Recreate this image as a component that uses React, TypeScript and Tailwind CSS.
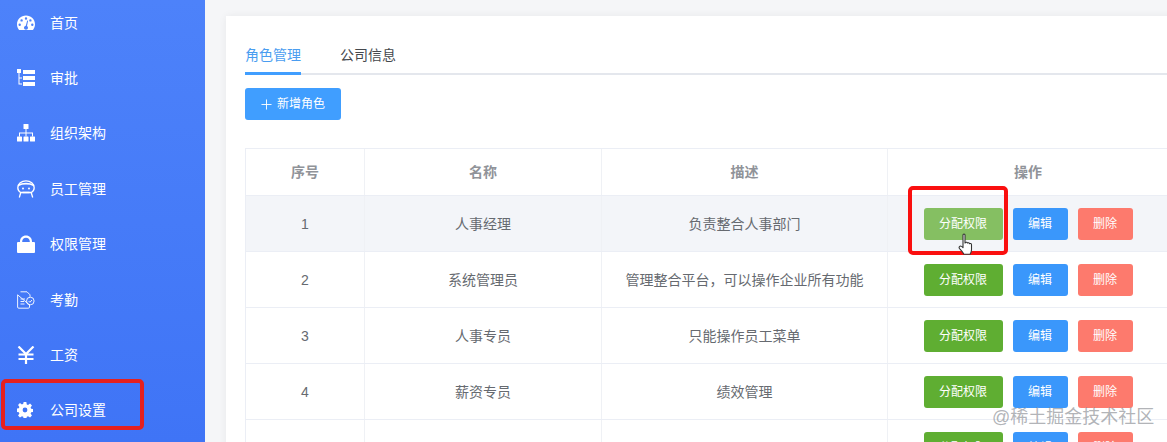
import { FC, ReactNode } from 'react';

const FONT = 'font-["Liberation_Sans","Noto_Sans_CJK_SC",sans-serif]';

const Gauge = () => (
    <svg viewBox="0 0 18 16" className="w-[18px] h-4" fill="#fff">
        <path fillRule="evenodd" d="M9 0.5C4 0.5 0 4.4 0 9.3c0 2 .6 3.8 1.7 5.2.3.4.7.6 1.2.6h12.2c.5 0 .9-.2 1.2-.6C17.4 13.100 18 11.300 18 9.300 18 4.400 14 .5 9 .5zM9 2.300a1.200 1.200 0 1 1 0 2.400 1.200 1.200 0 0 1 0-2.400zM4.600 4.200a1.200 1.200 0 1 1 0 2.400 1.200 1.200 0 0 1 0-2.400zM2.700 8.500a1.200 1.200 0 1 1 0 2.400 1.200 1.200 0 0 1 0-2.400zM15.300 8.500a1.200 1.200 0 1 1 0 2.400 1.200 1.200 0 0 1 0-2.400zM13.400 4.200a1.200 1.200 0 1 1 0 2.400 1.200 1.200 0 0 1 0-2.400zM10.200 5.500l.9.300-1.100 5.200c.6.400 1 1 1 1.700 0 1.100-.9 2-2 2s-2-.9-2-2c0-1 .8-1.900 1.800-2z" />
    </svg>
);

const Approve = () => (
    <svg viewBox="0 0 18 18" className="w-[18px] h-[18px]" fill="#fff">
        <rect x="0" y="0" width="4" height="4" />
        <rect x="6" y="1" width="12" height="4" />
        <rect x="6" y="7" width="12" height="4" />
        <rect x="6" y="13" width="12" height="4" />
        <path d="M1.500 4h1v4.500H5v1H2.500v5H5v1H1.500z" />
    </svg>
);

const Org = () => (
    <svg viewBox="0 0 18 18" className="w-[18px] h-[18px]" fill="#fff">
        <rect x="6.500" y="0" width="5" height="5" rx=".6" />
        <rect x="0" y="12.500" width="5" height="5" rx=".6" />
        <rect x="6.500" y="12.500" width="5" height="5" rx=".6" />
        <rect x="13" y="12.500" width="5" height="5" rx=".6" />
        <path d="M8.500 5h1v3.500h6.500v4h-1v-3H9.500v3h-1v-3H3v3H2v-4h6.500z" />
    </svg>
);

const Staff = () => (
    <svg viewBox="0 0 18 18" className="w-[18px] h-[18px]" fill="none" stroke="#fff" strokeWidth="1.300">
        <path d="M3.600 12.500C1.800 11.500.8 9.800.8 7.800.8 3.500 4.500.8 9 .8s8.200 2.700 8.200 7c0 2-1 3.700-2.800 4.700z" />
        <path d="M1.500 5.300C3.500 4.200 6 3.700 9 3.700s5.500.5 7.500 1.600" strokeWidth="1.800" />
        <path d="M3.800 12.500l-1.500 5M14.200 12.500l1.500 5M5.500 12.500h7" />
        <circle cx="6" cy="8.500" r="1" fill="#fff" stroke="none" />
        <circle cx="12" cy="8.500" r="1" fill="#fff" stroke="none" />
    </svg>
);

const Lock = () => (
    <svg viewBox="0 0 18 18" className="w-[18px] h-[18px]" fill="#fff">
        <path d="M3 8V6.500C3 3 5.600.5 9 .5s6 2.500 6 6V8h-2.200V6.500C12.800 4.300 11.200 2.700 9 2.700S5.200 4.300 5.200 6.500V8z" />
        <rect x="0" y="7" width="18" height="11" rx="1" />
    </svg>
);

const Attendance = () => (
    <svg viewBox="0 0 18 18" className="w-[18px] h-[18px]" fill="none" stroke="#fff" strokeWidth=".9">
        <path d="M3.500 .8h6.500l3 3v2M12.500 14v2a1.200 1.200 0 0 1-1.200 1.200H1.800A1.200 1.200 0 0 1 .6 16V3.800z" />
        <path d="M3.500 8h4.500M3.500 10.500h3.500M3.500 13h4" />
        <circle cx="13.300" cy="10" r="3.800" />
        <path d="M11.600 10l1.300 1.300 2.100-2.300" />
    </svg>
);

const Yen = () => (
    <svg viewBox="0 0 18 18" className="w-[18px] h-[18px]" fill="none" stroke="#fff" strokeWidth="2.200">
        <path d="M1.500 0.500L9 8l7.500-7.500M9 8v10M1.500 8.500h15M1.500 13h15" />
    </svg>
);

const Gear = () => (
    <svg viewBox="-1 -1 20 20" className="w-4 h-4" fill="#fff">
        <path fillRule="evenodd" d="M7.300 -1h3.400l.5 3 1.600.7 2.500-1.700 2.400 2.400-1.700 2.500.7 1.600 3 .5v3.400l-3 .5-.7 1.600 1.700 2.500-2.400 2.400-2.500-1.700-1.600.7-.5 3H7.300l-.5-3-1.600-.7-2.500 1.700-2.400-2.400 1.700-2.500-.7-1.600-3-.5V7.300l3-.5.7-1.600-1.700-2.500 2.400-2.400 2.500 1.700 1.600-.7zM9 6a3 3 0 1 0 0 6 3 3 0 0 0 0-6z" />
    </svg>
);

const Hand = () => (
    <svg viewBox="0 0 18 24" className="w-[18px] h-6" fill="#fff" stroke="#333" strokeWidth="1.100" strokeLinejoin="round">
        <path d="M6 2c0-1.300 2-1.300 2 0v8l.5-.5c.8-.6 1.800-.2 2 .5.700-.5 1.800-.2 2 .7.800-.5 2-.1 2 1v5c0 2-.5 3-1.500 4.500H7c-1-1.500-2-3-4-5-1-1-1.500-2 0-3 .8-.5 2 .5 3 1.500z" />
    </svg>
);

const NAV: { label: string; icon: ReactNode; h: string }[] = [
    { label: '首页', icon: <Gauge />, h: 'h-[55px]' },
    { label: '审批', icon: <Approve />, h: 'h-[55px]' },
    { label: '组织架构', icon: <Org />, h: 'h-[56px]' },
    { label: '员工管理', icon: <Staff />, h: 'h-[55px]' },
    { label: '权限管理', icon: <Lock />, h: 'h-[56px]' },
    { label: '考勤', icon: <Attendance />, h: 'h-[55px]' },
    { label: '工资', icon: <Yen />, h: 'h-[55px]' },
    { label: '公司设置', icon: <Gear />, h: 'h-[55px]' },
];

const ROWS = [
    { id: '1', name: '人事经理', desc: '负责整合人事部门', hover: true },
    { id: '2', name: '系统管理员', desc: '管理整合平台，可以操作企业所有功能' },
    { id: '3', name: '人事专员', desc: '只能操作员工菜单' },
    { id: '4', name: '薪资专员', desc: '绩效管理' },
    { id: '', name: '员工', desc: '员工' },
];

const GRID = 'grid grid-cols-[119px_237px_286px_280px] w-[931px]';
const CELL = 'flex items-center justify-center border-r border-[#eff1f5]';

const Row: FC<{ id: string; name: string; desc: string; hover?: boolean }> = ({ id, name, desc, hover }) => (
    <div className={ `${ GRID } h-14 border-b border-[#ebeef5] text-sm text-[#666a70] ${ hover ? 'bg-[#f3f5f9]' : '' }` }>
        <div className={ CELL }>{ id }</div>
        <div className={ CELL }>{ name }</div>
        <div className={ CELL }>{ desc }</div>
        <div className="flex items-center justify-center gap-[10px] text-xs text-white">
            <button className={ `w-[79px] h-8 rounded-[3px] ${ hover ? 'bg-[#85bf62]' : 'bg-[#5fae32]' }` }>分配权限</button>
            <button className="w-[55px] h-8 rounded-[3px] bg-[#3a97fb]">编辑</button>
            <button className="w-[55px] h-8 rounded-[3px] bg-[#fd7a6d]">删除</button>
        </div>
    </div>
);

export default function App()
{
    return (
        <div className={ `relative flex w-[1167px] h-[442px] overflow-hidden bg-[#f5f6f8] ${ FONT }` }>
            <aside className="w-[205px] shrink-0 bg-gradient-to-b from-[#4d82fa] to-[#3f74f6] text-white text-sm">
                <div className="-mt-[5px]">
                    { NAV.map((item) => (
                        <div key={ item.label } className={ `flex items-center ${ item.h }` }>
                            <span className="w-[50px] pl-[17px] flex items-center">{ item.icon }</span>
                            <span>{ item.label }</span>
                        </div>
                    )) }
                </div>
            </aside>

            <main className="flex-1 min-w-0 pl-[21px] pt-4">
                <div className="w-[950px] h-[500px] bg-white shadow-[0_0_8px_rgba(0,0,0,0.06)] pl-[19px] pt-[29px]">
                    <div className="h-[30px] w-[931px] flex border-b-2 border-[#e4e7ed] text-sm text-[#45484d]">
                        <div className="relative w-[95px] h-[30px] text-[#4a9df0]">
                            角色管理
                            <span className="absolute left-0 bottom-0 w-[56px] h-[3px] bg-[#409eff]"></span>
                        </div>
                        <div>公司信息</div>
                    </div>

                    <button className="mt-[13px] w-24 h-8 rounded-[3px] bg-[#409eff] text-white text-xs flex items-center justify-center gap-[5px]">
                        <svg viewBox="0 0 12 12" className="w-[11px] h-[11px]" stroke="#fff" strokeWidth="1" fill="none">
                            <path d="M6 .5v11M.5 6h11" />
                        </svg>
                        新增角色
                    </button>

                    <div className="mt-7 w-[931px] border-l border-t border-[#ebeef5]">
                        <div className={ `${ GRID } h-[47px] border-b border-[#ebeef5] text-sm font-bold text-[#909399]` }>
                            <div className={ CELL }>序号</div>
                            <div className={ CELL }>名称</div>
                            <div className={ CELL }>描述</div>
                            <div className="flex items-center justify-center">操作</div>
                        </div>
                        { ROWS.map((row) => <Row key={ row.name } { ...row } />) }
                    </div>
                </div>
            </main>

            {/* annotations drawn over the screenshot */}
            <div className="absolute left-[1px] top-[379px] w-[143px] h-[51px] rounded-[5px] border-[4px] border-[#e5201f]"></div>
            <div className="absolute left-[908px] top-[186px] w-[100px] h-[69px] rounded-[5px] border-[4px] border-[#fa0f0f]"></div>
            <div className="absolute left-[957px] top-[233px]"><Hand /></div>
            <div className="absolute left-[992px] top-[407px] text-[18px] leading-5 text-[#8f9399]/70">@稀土掘金技术社区</div>
        </div>
    );
}
